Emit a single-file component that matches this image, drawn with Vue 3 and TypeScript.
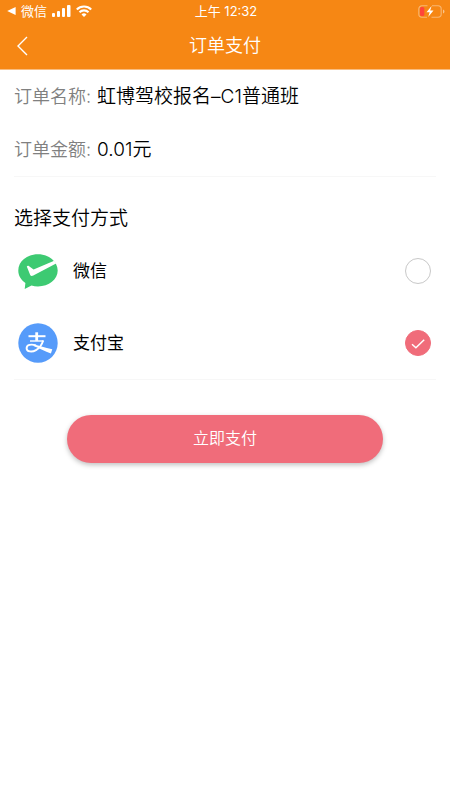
<script setup lang="ts">
import { ref } from 'vue'

type Method = 'wechat' | 'alipay'

const order = { name: '虹博驾校报名–C1普通班', amount: '0.01元' }
const methods: { id: Method; label: string }[] = [
  { id: 'wechat', label: '微信' },
  { id: 'alipay', label: '支付宝' },
]
const selected = ref<Method>('alipay')
</script>

<template>
  <div class="page">
    <header class="top">
      <div class="status">
        <div class="status-left">
          <svg class="back-app" viewBox="0 0 9 8" aria-hidden="true"><path d="M8.6 0v8L0.2 4z" fill="#fff" /></svg>
          <span>微信</span>
          <svg class="signal" viewBox="0 0 19 12" aria-hidden="true">
            <g fill="#fff">
              <rect x="0" y="8" width="3" height="4" rx="1" />
              <rect x="5" y="6" width="3" height="6" rx="1" />
              <rect x="10" y="3" width="3" height="9" rx="1" />
              <rect x="15" y="0" width="3.5" height="12" rx="1" />
            </g>
          </svg>
          <svg class="wifi" viewBox="0 0 16 12" aria-hidden="true">
            <g fill="none" stroke="#fff" stroke-width="2.1">
              <path d="M0.8 4.4a10.3 10.3 0 0 1 14.4 0" />
              <path d="M3.5 7.2a6.4 6.4 0 0 1 9 0" />
            </g>
            <path d="M8 12l-2.5-2.6a3.6 3.6 0 0 1 5 0z" fill="#fff" />
          </svg>
        </div>
        <time>上午 12:32</time>
        <svg class="battery" viewBox="0 0 27 13" aria-hidden="true">
          <path d="M9.5 0.8H4A3.2 3.2 0 0 0 0.8 4v5A3.2 3.2 0 0 0 4 12.2h5M14 0.8h6A3.2 3.2 0 0 1 23.2 4v5a3.2 3.2 0 0 1-3.2 3.2h-6.5" fill="none" stroke="#fff" stroke-opacity=".4" stroke-width="1.1" />
          <path d="M25 4.5c2 .7 2 3.3 0 4z" fill="#fff" fill-opacity=".5" />
          <rect x="2" y="2" width="4.3" height="9" rx="1.5" fill="#ff453a" />
          <path d="M13.6 1L8.5 7.2h3.2L10.2 12l5.3-6.4h-3.3z" fill="#fff" />
        </svg>
      </div>
      <nav class="nav">
        <button class="back" type="button" aria-label="返回">
          <svg viewBox="0 0 12 20" aria-hidden="true"><path d="M11 1L2 10l9 9" fill="none" stroke="#fff" stroke-width="1.4" /></svg>
        </button>
        <h1>订单支付</h1>
      </nav>
    </header>

    <main>
      <dl class="order">
        <div class="row">
          <dt>订单名称:</dt>
          <dd>{{ order.name }}</dd>
        </div>
        <div class="row">
          <dt>订单金额:</dt>
          <dd>{{ order.amount }}</dd>
        </div>
      </dl>

      <fieldset class="methods">
        <legend>选择支付方式</legend>
        <label v-for="m in methods" :key="m.id" class="method">
          <svg v-if="m.id === 'wechat'" class="logo" viewBox="0 0 40 40" aria-hidden="true">
            <path d="M20 3.3C9 3.3 0.3 10.5 0.3 19.5c0 5.1 2.7 9.5 7.1 12.5L6.7 38l6.8-3.5c2 .6 4.2.9 6.5.9 10.9 0 19.700-7 19.700-15.900S30.900 3.300 20 3.300z" fill="#3dca72" />
            <path d="M8.800 15.600c.6-1 1.500-.9 2.300-.3l4.500 3.200L36.200 9.800l1.900 2.600-22.800 12.200c-1.600.8-2.600.5-3.200-.9z" fill="#fff" />
          </svg>
          <svg v-else class="logo" viewBox="0 0 40 40" aria-hidden="true">
            <circle cx="20" cy="20" r="19.700" fill="#569bfa" />
            <g fill="none" stroke="#fff">
              <path d="M10.500 13.200h17" stroke-width="2" />
              <path d="M18.700 9.300v8.500" stroke-width="2.800" />
              <path d="M12 18h13.500" stroke-width="1.400" />
              <path d="M25.200 17.500c-1.200 4-3.900 7.600-7.200 9.600-4 2.400-9.400 1.800-9.400-1.900 0-3.400 4.500-4.400 9.400-2.700" stroke-width="1.900" />
            </g>
            <path d="M16 21.500c5.500 1.200 10.500 3 18.300 4.800l-1.400 4.200C27 28.200 21 25.200 15.500 23z" fill="#fff" />
          </svg>
          <span class="method-name">{{ m.label }}</span>
          <span class="choice">
            <input v-model="selected" type="radio" name="method" :value="m.id" />
            <svg class="tick" viewBox="0 0 26 26" aria-hidden="true"><path d="M7 14.200l3.900 3.500 8.300-8" fill="none" stroke="#fff" stroke-width="1.500" /></svg>
          </span>
        </label>
      </fieldset>

      <button class="pay" type="button">立即支付</button>
    </main>
  </div>
</template>

<style>
body {
  margin: 0;
  background: #fff;
}
</style>

<style scoped>
.page {
  min-height: 100vh;
  color: #000;
  font-family: Inter, "Noto Sans CJK SC", sans-serif;
}
.top {
  color: #fff;
  background: #f68714;
  border-bottom: 1px solid #f9bd80;
}
.status {
  display: grid;
  grid-template-columns: 1fr auto 1fr;
  align-items: center;
  height: 22px;
  padding: 0 5px 0 7px;
  font-size: 13px;
  line-height: 22px;
}
.status-left {
  display: flex;
  align-items: center;
  gap: 5px;
}
.back-app {
  width: 9px;
  height: 8px;
}
.signal {
  width: 19px;
  height: 12px;
}
.wifi {
  width: 16px;
  height: 12px;
}
.battery {
  justify-self: end;
  width: 27px;
  height: 13px;
}
.nav {
  display: grid;
  grid-template-columns: 48px 1fr 48px;
  align-items: center;
  height: 47px;
}
.back {
  display: flex;
  align-items: center;
  height: 48px;
  padding: 0 16px;
  border: 0;
  background: none;
}
.back svg {
  width: 12px;
  height: 20px;
}
h1 {
  margin: 0;
  font-size: 18px;
  font-weight: 350;
  line-height: 48px;
  text-align: center;
}
main {
  padding: 0 14px;
}
.order {
  margin: 0;
  border-bottom: 1px solid #f7f7f7;
}
.row {
  display: flex;
  gap: 6px;
  font-size: 18px;
  line-height: 53px;
}
dt {
  color: #808080;
  font-weight: 350;
}
dd {
  margin: 0;
  font-size: 19px;
  font-weight: 350;
}
.methods {
  min-width: 0;
  margin: 0;
  padding: 0;
  border: 0;
  border-bottom: 1px solid #f7f7f7;
}
legend {
  padding: 26px 0 0;
  font-size: 19px;
  font-weight: 350;
  line-height: 32px;
}
.method {
  display: flex;
  align-items: center;
  height: 72px;
  padding: 0 5px 0 4px;
  cursor: pointer;
}
.logo {
  width: 40px;
  height: 40px;
}
.method-name {
  flex: 1;
  margin-left: 15px;
  font-size: 17px;
  line-height: 24px;
}
.choice {
  position: relative;
  width: 26px;
  height: 26px;
}
.choice input {
  display: block;
  box-sizing: border-box;
  width: 26px;
  height: 26px;
  margin: 0;
  border: 1px solid #c8c8c8;
  border-radius: 50%;
  appearance: none;
}
.choice input:checked {
  border-color: #f06c7a;
  background: #f06c7a;
}
.tick {
  position: absolute;
  inset: 0;
  visibility: hidden;
  pointer-events: none;
}
.choice input:checked + .tick {
  visibility: visible;
}
.pay {
  display: block;
  width: 75%;
  height: 48px;
  margin: 35px auto 0;
  padding: 0 0 2px;
  border: 0;
  border-radius: 24px;
  color: #fff;
  background: #f06c7a;
  box-shadow: 0 2px 5px rgba(0, 0, 0, 0.25);
  font-family: inherit;
  font-size: 16px;
  font-weight: 350;
  line-height: 46px;
}
</style>
